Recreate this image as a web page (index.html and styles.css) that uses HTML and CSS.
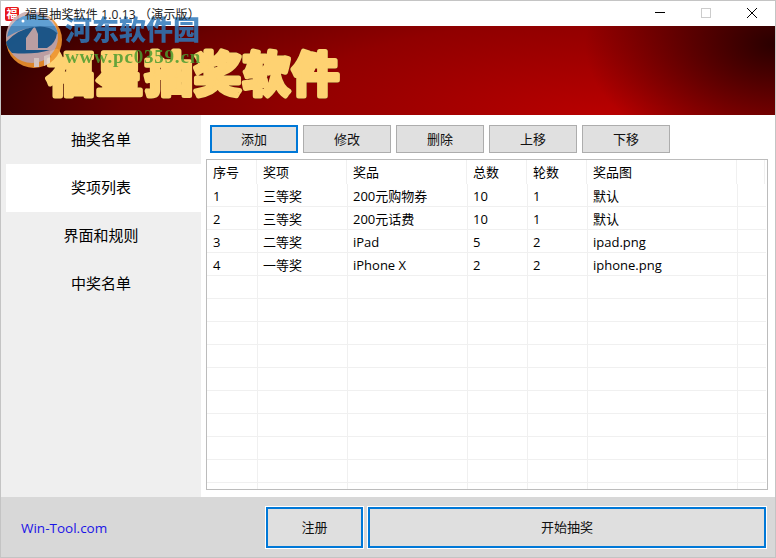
FILE: index.html
```html
<!DOCTYPE html>
<html lang="zh-CN">
<head>
    <meta charset="UTF-8">
    <title>福星抽奖软件</title>
    <link rel="stylesheet" href="styles.css">
</head>
<body>
    <div id="window">
        <div class="titlebar">
            <div class="app-icon">福</div>
            <div class="app-title">福星抽奖软件 1.0.13 （演示版）</div>
            <div class="win-btns">
                <svg width="46" height="25" viewBox="0 0 46 25"><path d="M18 11.500h10" stroke="#000" fill="none"/></svg>
                <svg width="46" height="25" viewBox="0 0 46 25"><rect x="18.500" y="7.500" width="9" height="9" stroke="#ccc" fill="none"/></svg>
                <svg width="46" height="25" viewBox="0 0 46 25"><path d="M18 7l10 10M28 7L18 17" stroke="#000" fill="none"/></svg>
            </div>
        </div>

        <div class="banner">
            <svg class="banner-svg" width="774" height="89" viewBox="0 0 774 89">
                <text class="banner-title" x="46" y="65">福星抽奖软件</text>
            </svg>
        </div>

        <div class="middle">
            <div class="sidebar">
                <div class="nav-item">抽奖名单</div>
                <div class="nav-item active">奖项列表</div>
                <div class="nav-item">界面和规则</div>
                <div class="nav-item">中奖名单</div>
            </div>
            <div class="content">
                <div class="toolbar">
                    <button class="btn focused">添加</button>
                    <button class="btn">修改</button>
                    <button class="btn">删除</button>
                    <button class="btn">上移</button>
                    <button class="btn">下移</button>
                </div>
                <div class="table-box">
                    <table>
                        <thead>
                            <tr><th class="c1">序号</th><th class="c2">奖项</th><th class="c3">奖品</th><th class="c4">总数</th><th class="c5">轮数</th><th class="c6">奖品图</th><th></th></tr>
                        </thead>
                        <tbody>
                            <tr><td>1</td><td>三等奖</td><td>200元购物券</td><td>10</td><td>1</td><td>默认</td><td></td></tr>
                            <tr><td>2</td><td>三等奖</td><td>200元话费</td><td>10</td><td>1</td><td>默认</td><td></td></tr>
                            <tr><td>3</td><td>二等奖</td><td>iPad</td><td>5</td><td>2</td><td>ipad.png</td><td></td></tr>
                            <tr><td>4</td><td>一等奖</td><td>iPhone X</td><td>2</td><td>2</td><td>iphone.png</td><td></td></tr>
                            <tr><td></td><td></td><td></td><td></td><td></td><td></td><td></td></tr>
                            <tr><td></td><td></td><td></td><td></td><td></td><td></td><td></td></tr>
                            <tr><td></td><td></td><td></td><td></td><td></td><td></td><td></td></tr>
                            <tr><td></td><td></td><td></td><td></td><td></td><td></td><td></td></tr>
                            <tr><td></td><td></td><td></td><td></td><td></td><td></td><td></td></tr>
                            <tr><td></td><td></td><td></td><td></td><td></td><td></td><td></td></tr>
                            <tr><td></td><td></td><td></td><td></td><td></td><td></td><td></td></tr>
                            <tr><td></td><td></td><td></td><td></td><td></td><td></td><td></td></tr>
                            <tr><td></td><td></td><td></td><td></td><td></td><td></td><td></td></tr>
                            <tr><td></td><td></td><td></td><td></td><td></td><td></td><td></td></tr>
                        </tbody>
                    </table>
                </div>
            </div>
        </div>

        <div class="footer">
            <a class="site-link">Win-Tool.com</a>
            <button class="btn focused big reg">注册</button>
            <button class="btn focused big start">开始抽奖</button>
        </div>

        <!-- watermark over the top left corner -->
        <div class="watermark">
            <svg class="wm-logo" width="60" height="60" viewBox="0 0 60 60">
                <circle cx="30" cy="28" r="28" fill="#ee9430"/>
                <circle cx="28" cy="25" r="26" fill="#c9b0b4"/>
                <path d="M3 25A26 26 0 0 1 54 22Q30 8 3 25Z" fill="#4f96cf"/>
                <path d="M2 30Q14 17 30 15L22 26V38H46Q30 43 8 41Q3 36 2 30Z" fill="#1a5f96"/>
                <path d="M31 15Q44 13 53 21Q52 31 43 36H34V22Z" fill="#1a5f96"/>
                <path d="M40 44l6-2v9l-6 3ZM30 46h5v9h-5Z" fill="#e4d8d4"/>
                <circle cx="19" cy="9" r="1.500" fill="#fff"/>
            </svg>
            <div class="wm-name">河东软件园</div>
            <div class="wm-url">www.pc0359.cn</div>
        </div>
    </div>
</body>
</html>
```

FILE: styles.css
```css
* {
    box-sizing: border-box;
}

body {
    margin: 0;
    background-color: #fff;
    font-family: "Open Sans", "Noto Sans CJK SC", sans-serif;
    font-size: 13px;
    color: #000;
}

#window {
    position: relative;
    width: 776px;
    height: 558px;
    border: 1px solid #c4c4c4;
    display: flex;
    flex-direction: column;
    overflow: hidden;
}

.titlebar {
    height: 25px;
    display: flex;
    align-items: center;
    padding-left: 4px;
    background-color: #fff;
}

.app-icon {
    width: 14px;
    height: 14px;
    background-color: #e8171b;
    color: #fff;
    border-radius: 2px;
    font-size: 11px;
    font-weight: 700;
    line-height: 14px;
    text-align: center;
}

/* the title stays readable on top of the watermark */
.app-title {
    position: relative;
    z-index: 2;
    margin-left: 6px;
    flex: 1;
    color: #222;
    font-size: 12px;
    letter-spacing: 0.15px;
}

.win-btns {
    display: flex;
}

.banner {
    height: 89px;
    background:
        radial-gradient(ellipse 190px 120px at 100% 20%, #2a0000 0%, rgba(60, 0, 0, 0) 100%),
        radial-gradient(ellipse 640px 190px at 600px 89px, #b80000 0%, #900000 50%, #6a0000 75%, #2c0000 100%);
}

.banner-svg {
    display: block;
}

.banner-title {
    font-family: "Noto Sans CJK SC", sans-serif;
    font-size: 47px;
    font-weight: 700;
    letter-spacing: 2px;
    fill: #fed272;
    stroke: #fed272;
    stroke-width: 5px;
    stroke-linejoin: round;
    filter: drop-shadow(0 0 0.6px #2a1500);
}

.middle {
    height: 382px;
    display: flex;
}

.sidebar {
    width: 200px;
    background-color: #efefef;
}

.nav-item {
    height: 48px;
    line-height: 47px;
    text-align: center;
    font-size: 15px;
}

.nav-item:first-child {
    margin-top: 1px;
}

.nav-item.active {
    background-color: #fff;
    margin-left: 5px;
    padding-right: 5px;
}

.content {
    flex: 1;
    padding: 10px 7px 7px 5px;
}

.toolbar {
    display: flex;
    gap: 5px;
    padding-left: 4px;
    margin-bottom: 6px;
}

.btn {
    width: 88px;
    height: 28px;
    padding: 0 0 2px;
    background-color: #e0e0e0;
    border: 1px solid #adadad;
    font-family: inherit;
    font-size: 13px;
    color: #111;
}

.btn.focused {
    border: 2px solid #0078d7;
}

.table-box {
    height: 331px;
    border: 1px solid #bcbcbc;
    overflow: hidden;
}

table {
    width: 559px;
    border-collapse: separate;
    border-spacing: 0;
    table-layout: fixed;
}

th {
    height: 24px;
    padding: 0 0 2px 5px;
    font-weight: 400;
    text-align: left;
    border-right: 1px solid transparent;
    box-shadow: inset -1px 0 #f0f0f0;
}

td {
    height: 23px;
    padding: 1px 0 0 5px;
    border-right: 1px solid #f0f0f0;
    border-bottom: 1px solid #f0f0f0;
    line-height: 20px;
}

th:first-child, td:first-child {
    padding-left: 6px;
}

td:last-child {
    border-right: none;
}

.c1 { width: 51px; }
.c2 { width: 90px; }
.c3 { width: 120px; }
.c4 { width: 60px; }
.c5 { width: 60px; }
.c6 { width: 150px; }

.footer {
    flex: 1;
    display: flex;
    align-items: center;
    background-color: #d8d8d8;
    padding: 1px 0 0 20px;
}

.site-link {
    width: 245px;
    color: #1a14e6;
    font-size: 13.500px;
}

.btn.big {
    height: 41px;
    outline: 1px solid #fff;
    background-color: #dfdfdf;
}

.reg {
    width: 97px;
    margin-right: 5px;
}

.btn.start {
    width: 398px;
}

.watermark {
    position: absolute;
    left: 0;
    top: 0;
    width: 210px;
    height: 72px;
}

.wm-logo {
    position: absolute;
    left: 3px;
    top: 11px;
    opacity: 0.9;
}

.wm-name {
    position: absolute;
    left: 64px;
    top: 10px;
    font-family: "Noto Sans CJK SC", sans-serif;
    font-size: 27px;
    font-weight: 900;
    line-height: 36px;
    color: #2f78ba;
    opacity: 0.85;
}

.wm-url {
    position: absolute;
    left: 64px;
    top: 46px;
    font-family: "Liberation Serif", serif;
    font-size: 19px;
    font-weight: 700;
    letter-spacing: 0.8px;
    line-height: 20px;
    color: #4c9c30;
    opacity: 0.85;
}
```
